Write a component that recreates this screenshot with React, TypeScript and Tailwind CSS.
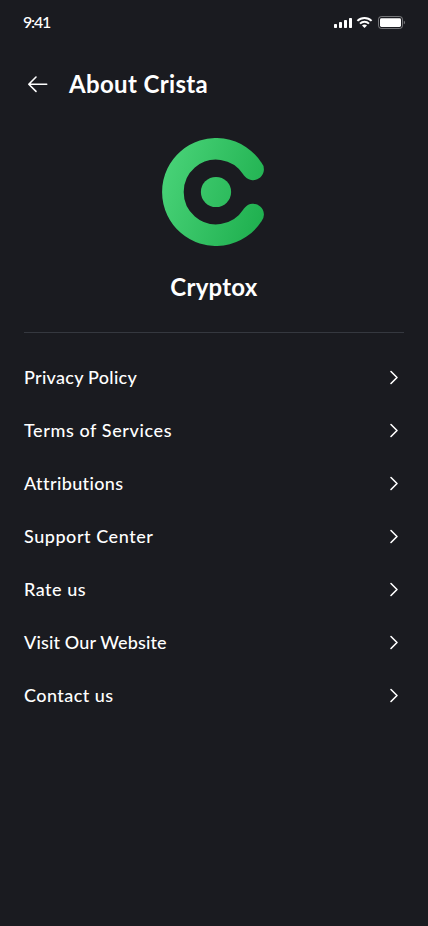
const links = [
  { label: "Privacy Policy", tracking: "tracking-[0.28px]" },
  { label: "Terms of Services", tracking: "tracking-[0.6px]" },
  { label: "Attributions", tracking: "tracking-[0.38px]" },
  { label: "Support Center", tracking: "tracking-[0.55px]" },
  { label: "Rate us", tracking: "tracking-[0.5px]" },
  { label: "Visit Our Website", tracking: "tracking-[0.14px]" },
  { label: "Contact us", tracking: "tracking-[0.45px]" },
];

function StatusBar() {
  return (
    <div className="flex h-11 items-center justify-between px-[23px]">
      <span className="text-base font-medium leading-5 tracking-[-1.2px]">9:41</span>
      <svg width="72" height="14" viewBox="0 0 72 14" fill="none">
        <g fill="white">
          <rect x="1" y="9" width="3" height="4" rx="0.7" />
          <rect x="6" y="7" width="3" height="6" rx="0.7" />
          <rect x="11" y="5" width="3" height="8" rx="0.7" />
          <rect x="16" y="3" width="3" height="10" rx="0.7" />
          <path d="M31.5 9.5c1 0 1.9.4 2.5 1L31.5 13 29 10.5c.6-.6 1.5-1 2.5-1z" />
        </g>
        <path
          d="M24.4 5.9a10.2 10.2 0 0 1 14.2 0M27 8.6a6.5 6.5 0 0 1 9 0"
          stroke="white"
          strokeWidth="2"
        />
        <rect x="45.5" y="1.5" width="24" height="12" rx="2.8" stroke="white" strokeOpacity="0.4" />
        <rect x="47" y="3.2" width="21" height="8.8" rx="1.4" fill="white" />
        <path d="M70.8 5.7c.9.3 1.2 1 1.2 1.8s-.3 1.5-1.2 1.8z" fill="white" fillOpacity="0.4" />
      </svg>
    </div>
  );
}

function Logo() {
  return (
    <svg width="108" height="108" viewBox="0 0 108 108" fill="none">
      <defs>
        <linearGradient id="logo" x1="0" y1="36" x2="108" y2="72" gradientUnits="userSpaceOnUse">
          <stop stopColor="#48d277" />
          <stop offset="1" stopColor="#1eaf4e" />
        </linearGradient>
      </defs>
      <path
        d="M91.1 31.4L90.4 30.6A43.2 43.2 0 1 0 90.4 77.4L91.1 76.6"
        stroke="url(#logo)"
        strokeWidth="21.6"
        strokeLinecap="round"
        strokeLinejoin="round"
      />
      <circle cx="54" cy="54" r="15.1" fill="url(#logo)" />
    </svg>
  );
}

export default function App() {
  return (
    <div className="min-h-screen bg-[#1a1b20] font-['Lato',sans-serif] text-white">
      <StatusBar />
      <header className="flex h-20 items-center px-6">
        <button type="button" aria-label="Back" className="mr-[17px]">
          <svg width="28" height="28" viewBox="0 0 28 28" fill="none">
            <path
              d="M22.7 14.2H4.8M12 7L4.8 14.2L12 21.4"
              stroke="white"
              strokeWidth="1.6"
              strokeLinecap="round"
              strokeLinejoin="round"
            />
          </svg>
        </button>
        <h1 className="text-2xl font-bold leading-8 tracking-[0.35px]">About Crista</h1>
      </header>

      <main className="px-6">
        <section className="flex flex-col items-center border-b border-[#35383f] pb-[29px] pt-3.5">
          <div className="pl-1">
            <Logo />
          </div>
          <h2 className="mt-[25px] text-2xl font-bold leading-8 tracking-[0.25px]">Cryptox</h2>
        </section>
        <ul className="mt-[30px] space-y-[25px]">
          {links.map((link) => (
            <li key={link.label}>
              <button type="button" className="flex h-7 w-full items-center justify-between text-left">
                <span className={`text-lg font-medium leading-7 ${link.tracking}`}>{link.label}</span>
                <svg width="20" height="20" viewBox="0 0 20 20" fill="none">
                  <path
                    d="M7 4.5L13 10.5L7 16.5"
                    stroke="white"
                    strokeWidth="1.6"
                    strokeLinecap="round"
                    strokeLinejoin="round"
                  />
                </svg>
              </button>
            </li>
          ))}
        </ul>
      </main>
    </div>
  );
}
